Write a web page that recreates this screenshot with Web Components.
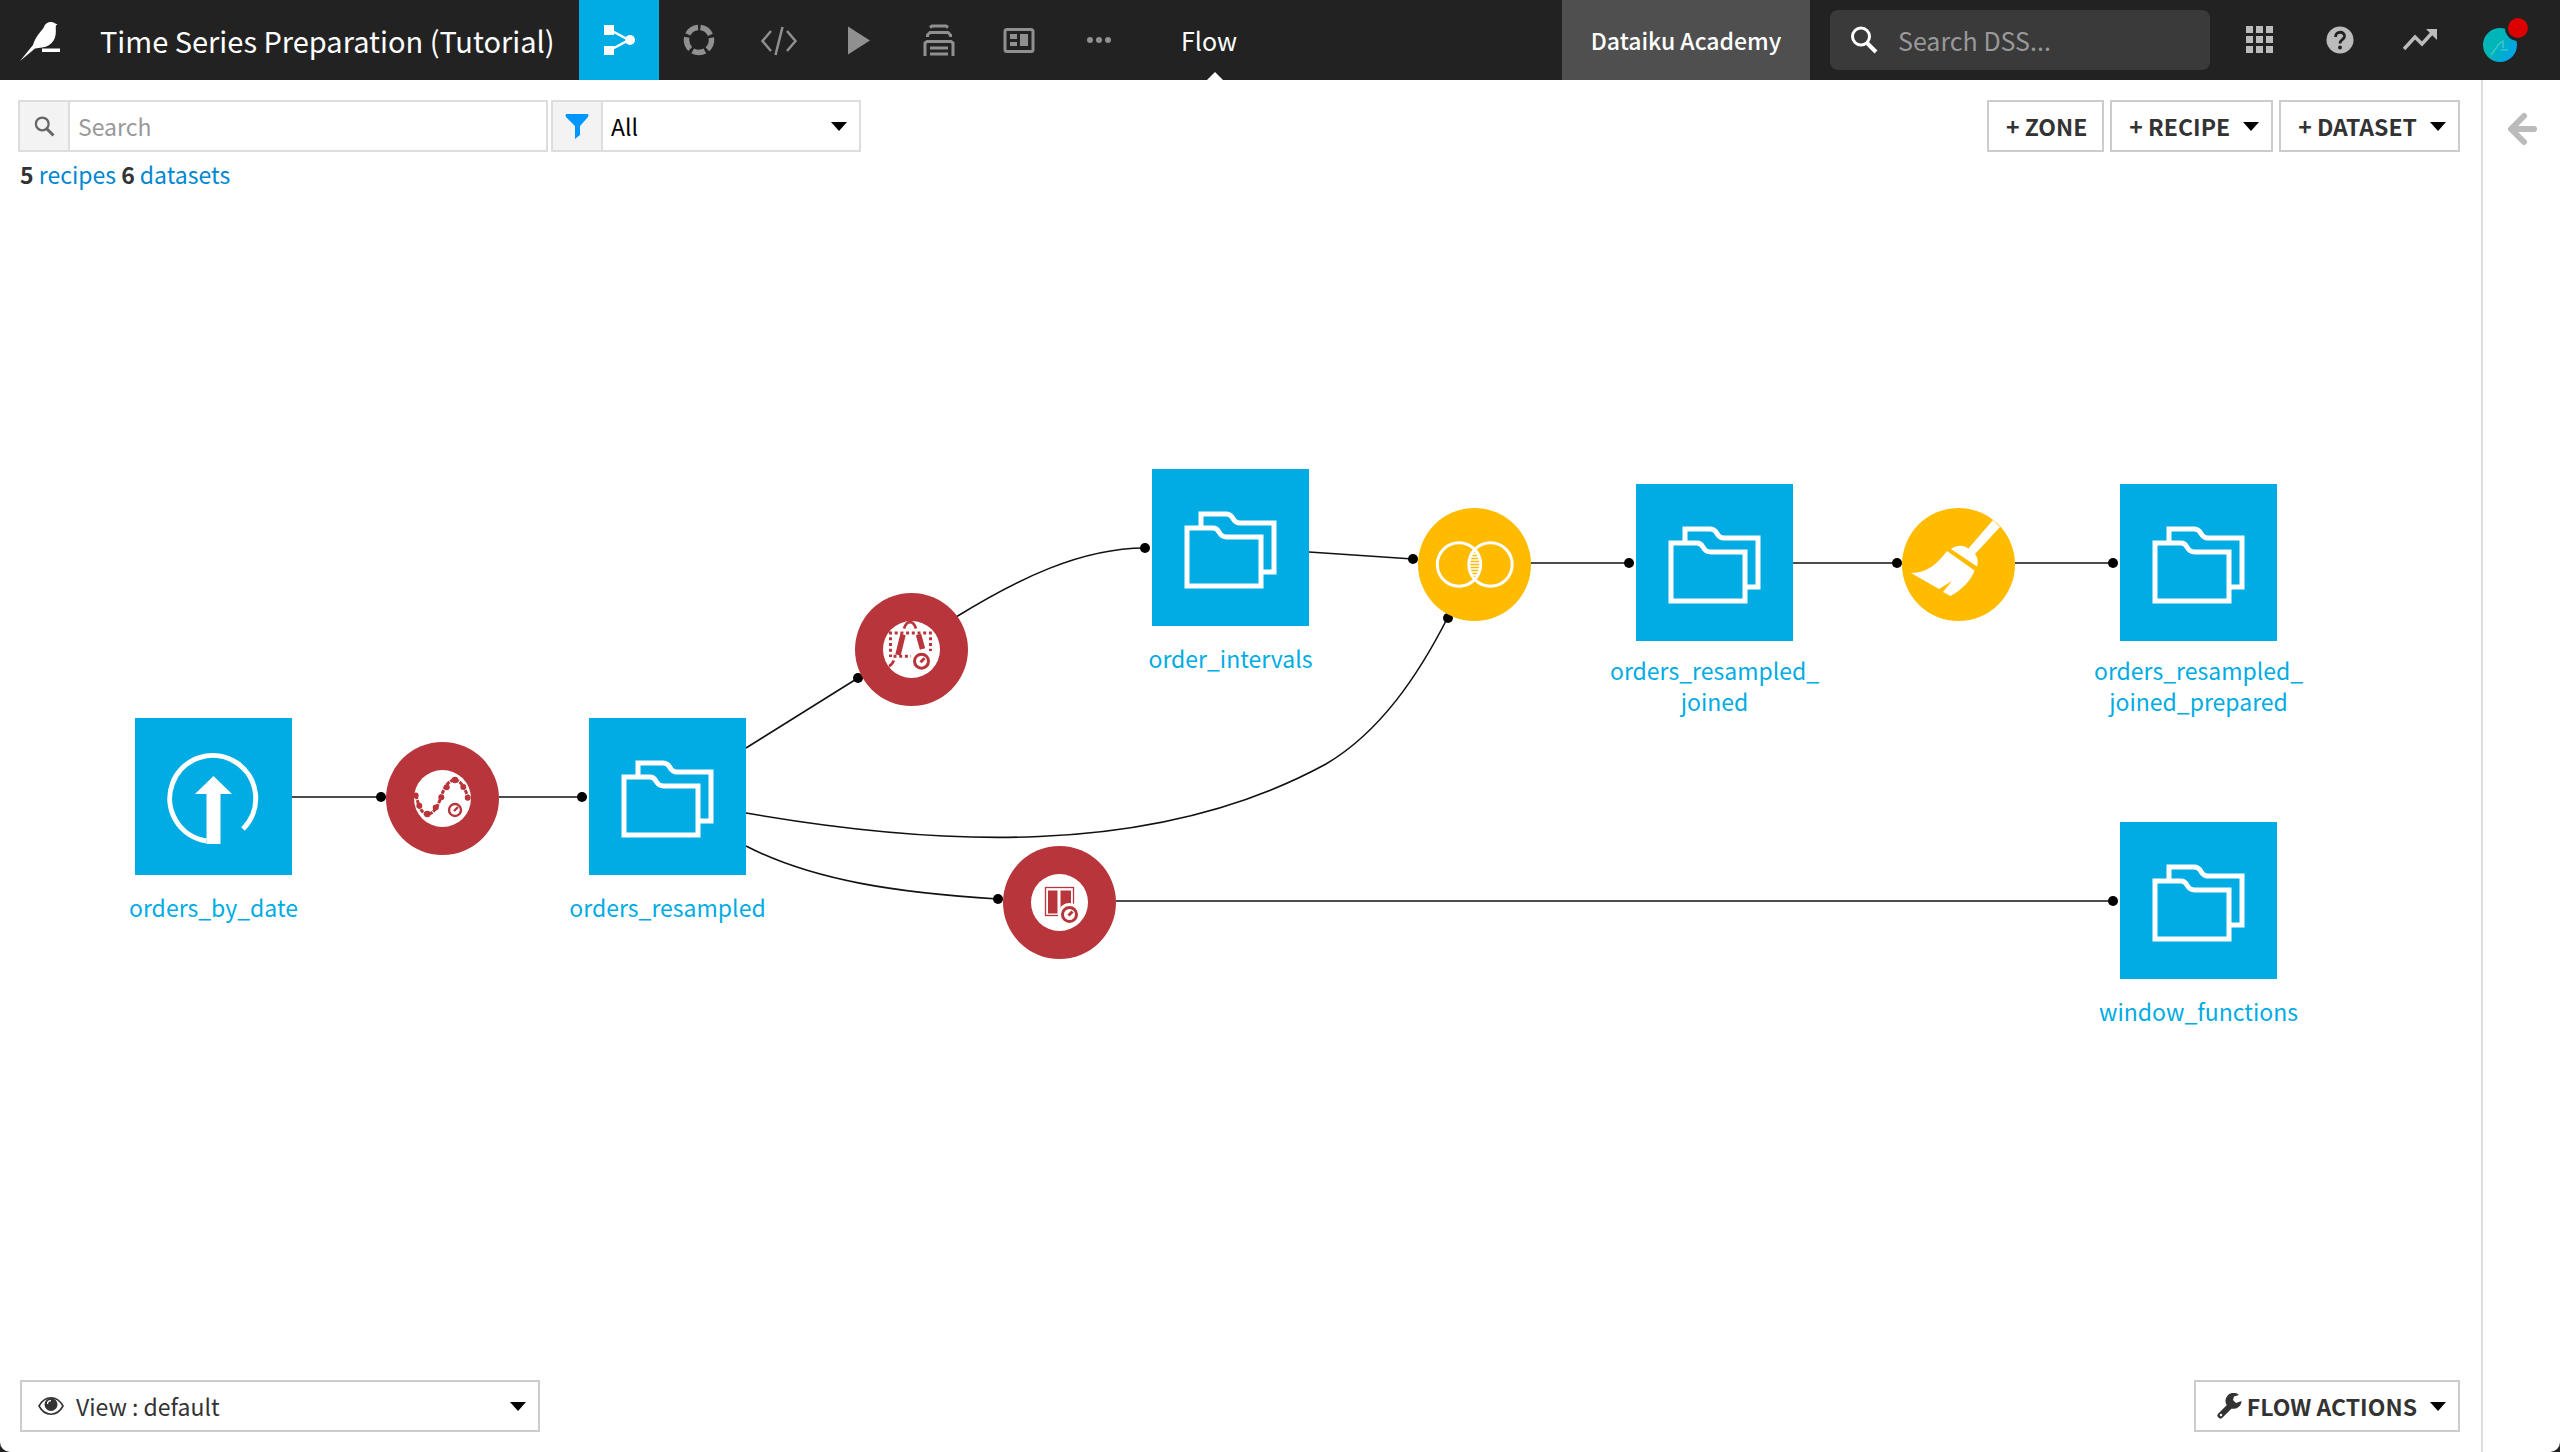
<!DOCTYPE html>
<html lang="en">
<head>
<meta charset="utf-8">
<title>Time Series Preparation (Tutorial) - Flow</title>
<style>
  html, body { margin: 0; height: 100%; background: #222; }
  body { font: 23px/32px "Noto Sans CJK SC", "Open Sans", sans-serif; color: #333; }
</style>
</head>
<body>
<dss-app></dss-app>
<script>
const BASE = `
  *, *::before, *::after { box-sizing: border-box; }
  svg { display: block; flex: none; }
  a { color: inherit; text-decoration: none; }
  button, input, select { font: inherit; color: inherit; margin: 0; border: 0; padding: 0; background: none; border-radius: 0; outline: 0; }
  select { appearance: none; }
  ::placeholder { color: #999; opacity: 1; }
`;
function define(name, html, css, setup) {
  const template = document.createElement('template');
  template.innerHTML = `<style>${BASE}${css}</style>${html}`;
  customElements.define(name, class extends HTMLElement {
    connectedCallback() {
      if (this.shadowRoot) return;
      this.attachShadow({ mode: 'open' }).append(template.content.cloneNode(true));
      if (setup) setup(this, this.shadowRoot);
    }
  });
}

const FOLDERS = `<g fill="none" stroke="#fff" stroke-width="5">
  <path d="M35 59H61C69 59 65 68 75 68H109V117H35Z"/>
  <path d="M49 57V45H74C83 45 79 54 88 54H122V103H111"/></g>`;
const UPLOAD = `<path d="M71.500 123A43 43 0 1 1 108 111" fill="none" stroke="#fff" stroke-width="5"/>
  <path d="M78.500 58L97 76H85.500V126H71.500V76H60Z" fill="#fff"/>`;
const clock = (x, y, r, w) => `<circle cx="${x}" cy="${y}" r="${r}" fill="#fff" stroke="#b8363b" stroke-width="${w}"/>
  <path d="M${x - 1} ${y + 1}l4-4" stroke="#b8363b" stroke-width="${w}"/>`;
const ICONS = {
  logo: ['20 22 42 42', `<path fill="#fff" d="M20 62L33 46C36 36 42 32 44 28C45 24.500 48 23 51 23C54 23 55 24.500 57.500 25.500C56 26 55.500 27 55.800 30C56.500 39 53 47 42 48.500L35 49.500Z"/><path fill="#fff" d="M42 49.500H60V53H42Z"/>`],
  flow: ['0 0 80 80', `<g fill="#fff"><path d="M25 25H35V35H25ZM25 46H35V55H25Z"/><circle cx="51" cy="40" r="5"/></g><path d="M33 31L50 40L33 49" fill="none" stroke="#fff" stroke-width="2.500"/>`],
  ring: ['0 0 80 80', `<circle cx="40" cy="40" r="12.500" fill="none" stroke="#909090" stroke-width="5.500" stroke-dasharray="12.700 3.008" stroke-dashoffset="-1.500" transform="rotate(-90 40 40)"/>`],
  code: ['0 0 80 80', `<path d="M32 31L23.500 41L32 51M48 31L56.500 41L48 51M43.500 27L36.500 55" fill="none" stroke="#909090" stroke-width="2.500"/>`],
  play: ['0 0 80 80', `<path d="M29 26.500L51 40.500L29 54.500Z" fill="#909090"/>`],
  stack: ['0 0 80 80', `<g fill="none" stroke="#909090" stroke-width="3"><path d="M31 27.500L33 26H47L49 27.500M28.500 37V35L31 32.500H49L51.500 35V37M26 56V43L28 41.500H52L54 43V56M31 48H49M31 54H49"/></g>`],
  board: ['0 0 80 80', `<rect x="26" y="29.500" width="28" height="22" rx="2" fill="none" stroke="#909090" stroke-width="3"/><path d="M31 34H38V39H31ZM31 42H38V46H31ZM41 34H49V46H41Z" fill="#909090"/>`],
  dots: ['0 0 80 80', `<g fill="#909090"><circle cx="31" cy="40" r="3"/><circle cx="40" cy="40" r="3"/><circle cx="49" cy="40" r="3"/></g>`],
  lens: ['0 0 28 28', `<circle cx="11" cy="10.500" r="8.500" fill="none" stroke="currentColor" stroke-width="3"/><path d="M17 17L26 26" stroke="currentColor" stroke-width="4"/>`],
  grid: ['0 0 28 28', `<path fill="#bbb" d="M0 0h7v7h-7zM10 0h7v7h-7zM20 0h7v7h-7zM0 10h7v7h-7zM10 10h7v7h-7zM20 10h7v7h-7zM0 20h7v7h-7zM10 20h7v7h-7zM20 20h7v7h-7z"/>`],
  help: ['0 0 28 28', `<circle cx="14" cy="14" r="13.500" fill="#bbb"/><path d="M9.500 11C9.500 4.500 19 5 18.500 10.500C18 14 14 13.500 14 17.500" fill="none" stroke="#222" stroke-width="2.800"/><circle cx="14" cy="21.500" r="2" fill="#222"/>`],
  trend: ['0 0 34 22', `<path d="M1 20L12 8L19 15L29 4" fill="none" stroke="#bbb" stroke-width="3.500"/><path d="M23 0H34V11Z" fill="#bbb"/>`],
  avatar: ['0 0 46 46', `<defs><linearGradient id="g" x2="1" y2=".6"><stop offset=".5" stop-color="#00b5b8"/><stop offset="1" stop-color="#00a3e8"/></linearGradient></defs><circle cx="17" cy="28" r="17" fill="url(#g)"/><path d="M8 38L16 27L20 24V31M18 33H25" stroke="#3cc6ca" fill="none" stroke-width="1.500"/><circle cx="35" cy="11" r="13" fill="#222"/><circle cx="35" cy="11" r="10" fill="#dc0000"/>`],
  funnel: ['0 0 26 26', `<path fill="#0096ff" d="M2 1H24Q25 2 24 4L16 13V22L11 26V13L2 4Q1 2 2 1Z"/>`],
  eye: ['0 0 26 20', `<path d="M1 10C7-1 19-1 25 10C19 21 7 21 1 10Z" fill="none" stroke="#333" stroke-width="1.600"/><circle cx="13" cy="8.500" r="6.500" fill="#333"/><path d="M9.500 8C9.500 6 11 4.700 13 4.700" fill="none" stroke="#fff" stroke-width="1.300"/>`],
  wrench: ['0 0 26 26', `<path d="M3.500 22.500L15 11" stroke="#333" stroke-width="6" stroke-linecap="round"/><path fill="#333" d="M22 2A8 8 0 1 0 24.500 8L19 10L16 7L17 3.500Z"/><circle cx="4" cy="22" r="1.200" fill="#fff"/>`],
  caret: ['0 0 16 9', `<path d="M0 0H16L8 9Z" fill="#000"/>`],
  back: ['0 0 32 34', `<path d="M18 4L5 17L18 30M6 17H28" fill="none" stroke="#bbb" stroke-width="6" stroke-linecap="round" stroke-linejoin="round"/>`],
  folders: ['0 0 157 157', FOLDERS],
  upload: ['0 0 157 157', UPLOAD],
  resample: ['0 0 113 113', `<circle cx="56.500" cy="56.500" r="28.500" fill="#fff"/>
    <path d="M30 53C33 66 36 72 41.500 72C48 72 52 64 55 55S62 38 69 38C75 38 80 48 82 56" fill="none" stroke="#b8363b" stroke-width="3" stroke-dasharray="4 1"/>
    <g fill="#b8363b"><circle cx="29.700" cy="53.500" r="3"/><circle cx="33.300" cy="63.800" r="3"/><circle cx="41.300" cy="72" r="3.300"/><circle cx="49.700" cy="65.500" r="3"/><circle cx="55.300" cy="55.200" r="3"/><circle cx="60.700" cy="45.200" r="3"/><circle cx="69" cy="38" r="3.300"/><circle cx="77.300" cy="45" r="3"/><circle cx="81.700" cy="55.800" r="3"/></g>${clock(69, 68, 6, 2.4)}`],
  interval: ['0 0 113 113', `<circle cx="56.500" cy="56.500" r="28.500" fill="#fff"/>
    <g fill="none" stroke="#b8363b"><path d="M34 40H78M35.500 44.300V64M75.500 44.300V58M38.500 63.200H56" stroke-width="3" stroke-dasharray="3 2.700"/>
    <path d="M49 35.500C52 27 58 27 61 35.500M34 73Q37 72 38.800 67.500" stroke-width="2.700"/><path d="M48 41.500L43 62M63.500 41.500L67.500 56" stroke-width="5.500"/></g>${clock(66.5, 68.2, 7, 3)}`],
  window: ['0 0 113 113', `<circle cx="56.500" cy="56.500" r="28.500" fill="#fff"/><rect x="42.500" y="41.500" width="28" height="28" fill="none" stroke="#b8363b" stroke-width="1.300"/>
    <path d="M45 44.500H54.500V67.500H45ZM57.500 44.500H68V67.500H57.500Z" fill="#b8363b"/><circle cx="66.500" cy="68.500" r="11.500" fill="#fff"/>${clock(66.5, 68.5, 7, 3)}`],
  join: ['0 0 113 113', `<g fill="none" stroke="#fff" stroke-width="3"><circle cx="41" cy="56.500" r="21.700"/><circle cx="72.500" cy="56.500" r="21.700"/></g>
    <path d="M54 46H59M52 49H61M52 52H61M51 55H62M51 58H62M52 61H61M52 64H61M54 67H59" stroke="#fff" stroke-width="1.500"/>`],
  broom: ['0 0 113 113', `<g fill="#fff"><path d="M91 12L98 19L73 46L66 41Z"/><path d="M49 41C56 36 63 37 68 42C75 46 77 52 75 58.500Z"/>
    <path d="M45 43L72.500 62.500C70 71 60 82 48.500 88L41 84L50 73L37 81L9 65C25 65 35 56 45 43Z"/></g>`]
};
define('dss-icon', '', ':host { display: block; flex: none; }', (el, root) => {
  const [box, art] = ICONS[el.getAttribute('name')];
  const [, , w, h] = box.split(' ');
  root.innerHTML += `<svg width="${w}" height="${h}" viewBox="${box}" aria-hidden="true">${art}</svg>`;
});

define('dss-header', `
  <a class="logo" href="#home" aria-label="Home"><dss-icon name="logo"></dss-icon></a>
  <a class="title" href="#project">Time Series Preparation (Tutorial)</a>
  <nav>
    <a class="on" href="#flow" aria-label="Flow"><dss-icon name="flow"></dss-icon></a>
    <a href="#lab" aria-label="Lab"><dss-icon name="ring"></dss-icon></a>
    <a href="#code" aria-label="Code"><dss-icon name="code"></dss-icon></a>
    <a href="#jobs" aria-label="Jobs"><dss-icon name="play"></dss-icon></a>
    <a href="#deploy" aria-label="Deployment"><dss-icon name="stack"></dss-icon></a>
    <a href="#boards" aria-label="Dashboards"><dss-icon name="board"></dss-icon></a>
    <a href="#more" aria-label="More"><dss-icon name="dots"></dss-icon></a>
  </nav>
  <a class="current" href="#flow">Flow</a>
  <a class="academy" href="#academy">Dataiku Academy</a>
  <label class="search"><dss-icon name="lens"></dss-icon><input type="text" placeholder="Search DSS..." aria-label="Search DSS"></label>
  <div class="tools">
    <button aria-label="Applications"><dss-icon name="grid"></dss-icon></button>
    <button aria-label="Help"><dss-icon name="help"></dss-icon></button>
    <button aria-label="Activity"><dss-icon name="trend"></dss-icon></button>
  </div>
  <button class="me" aria-label="Profile"><dss-icon name="avatar"></dss-icon></button>`, `
  :host { display: flex; align-items: center; height: 80px; background: #222; color: #fff; flex: none; }
  .logo { padding: 4px 38px 0 20px; }
  .title { flex: 0 0 479px; font-size: 29px; white-space: nowrap; }
  nav { display: flex; }
  .on { background: #00ace3; }
  .current { position: relative; align-self: stretch; line-height: 80px; margin-left: 42px; padding-right: 12px; font-size: 25px; }
  .current::after { content: ""; position: absolute; bottom: 0; left: 50%; margin-left: -8px; border: 8px solid transparent; border-top: 0; border-bottom-color: #fff; }
  .academy { margin-left: auto; width: 248px; text-align: center; line-height: 80px; background: #4f4f4f; font-weight: 500; }
  .search { display: flex; align-items: center; width: 380px; height: 60px; margin: 0 33px 0 20px; padding: 0 20px; gap: 20px; background: #3a3a3a; border-radius: 8px; font-size: 25px; }
  .search input { flex: 1; min-width: 0; }
  .tools { display: flex; gap: 46px; }
  .tools button { display: flex; align-items: center; justify-content: center; width: 34px; }
  .me { margin: 0 31px 0 46px; }`);

define('dss-select', `<label><span><slot></slot></span><select></select><dss-icon name="caret"></dss-icon></label>`, `
  :host { display: block; height: 52px; border: 2px solid #ddd; background: #fff; }
  label { display: flex; align-items: center; height: 100%; padding-right: 12px; }
  span { display: flex; align-items: center; justify-content: center; align-self: stretch; width: 50px; background: #f3f3f3; border-right: 2px solid #ddd; }
  select { flex: 1; min-width: 0; height: 100%; padding-left: 8px; color: #000; }
  :host([plain]) { border-color: #ccc; }
  :host([plain]) span { background: none; border: 0; width: 58px; }
  :host([plain]) select { color: #333; padding: 0; margin-left: -4px; }`, (el, root) => {
  const select = root.querySelector('select');
  select.setAttribute('aria-label', el.getAttribute('label'));
  select.add(new Option(el.getAttribute('value')));
});

define('dss-button', `<button><slot></slot></button>`, `
  :host { display: block; }
  button { display: flex; align-items: center; justify-content: center; height: 52px; padding: 0 12px 0 17px; border: 2px solid #ccc; background: #fff; font-weight: 700; white-space: nowrap; }
  :host([simple]) button { padding-right: 15px; }
  ::slotted(dss-icon[name=caret]) { margin-left: 13px; }
  ::slotted(dss-icon[name=wrench]) { margin: 0 4px; }`);

define('flow-dataset', `<a href="#dataset"><span><slot></slot></span></a>`, `
  :host { position: absolute; width: 157px; }
  a { display: flex; flex-direction: column; align-items: center; gap: 17px; color: #00ace3; }
  dss-icon { background: #00ace3; }
  span { text-align: center; white-space: nowrap; line-height: 31px; }
  :host([lines]) a { gap: 14px; }`, place);
define('flow-recipe', `<a href="#recipe"></a>`, `
  :host { position: absolute; }
  dss-icon { border-radius: 50%; overflow: hidden; background: #b8363b; }
  :host([kind=visual]) dss-icon { background: #ffbb00; }`, place);
function place(el, root) {
  el.style.left = el.getAttribute('x') + 'px';
  el.style.top = el.getAttribute('y') + 'px';
  const link = root.querySelector('a');
  const icon = document.createElement('dss-icon');
  icon.setAttribute('name', el.getAttribute('icon'));
  link.prepend(icon);
  link.setAttribute('aria-label', el.textContent || el.getAttribute('icon'));
}

define('flow-edges', '', ':host { position: absolute; inset: 0; } svg { width: 100%; height: 100%; overflow: visible; }', (el, root) => {
  const edges = [
    ['M292 597H381', 381, 597], ['M499 597H582', 582, 597], ['M746 548L858 478', 858, 478],
    ['M956 417C1016 380 1080 348 1145 348', 1145, 348], ['M1309 352L1413 359', 1413, 359],
    ['M746 613C930 645 1150 660 1326 564C1380 532 1418 476 1448 417', 1448, 418],
    ['M746 646C814 681 900 693 998 699', 998, 699], ['M1116 701H2113', 2113, 701],
    ['M1530 363H1629', 1629, 363], ['M1793 363H1897', 1897, 363], ['M2015 363H2113', 2113, 363]
  ];
  root.innerHTML += `<svg>${edges.map(([d, x, y]) => `<path d="${d}" fill="none" stroke="#111" stroke-width="1.600"/><circle cx="${x}" cy="${y}" r="5"/>`).join('')}</svg>`;
});

define('flow-canvas', `
  <flow-edges></flow-edges>
  <flow-dataset x="135" y="518" icon="upload">orders_by_date</flow-dataset>
  <flow-recipe x="386" y="542" icon="resample"></flow-recipe>
  <flow-dataset x="589" y="518" icon="folders">orders_resampled</flow-dataset>
  <flow-recipe x="855" y="393" icon="interval"></flow-recipe>
  <flow-recipe x="1003" y="646" icon="window"></flow-recipe>
  <flow-dataset x="1152" y="269" icon="folders">order_intervals</flow-dataset>
  <flow-recipe kind="visual" x="1418" y="308" icon="join"></flow-recipe>
  <flow-dataset lines="2" x="1636" y="284" icon="folders">orders_resampled_<br>joined</flow-dataset>
  <flow-recipe kind="visual" x="1902" y="308" icon="broom"></flow-recipe>
  <flow-dataset lines="2" x="2120" y="284" icon="folders">orders_resampled_<br>joined_prepared</flow-dataset>
  <flow-dataset x="2120" y="622" icon="folders">window_functions</flow-dataset>`,
  ':host { display: block; position: relative; flex: 1; }');

define('flow-toolbar', `
  <div class="row">
    <label class="search"><span><dss-icon name="lens"></dss-icon></span><input type="text" placeholder="Search" aria-label="Search the flow"></label>
    <dss-select label="Filter" value="All"><dss-icon name="funnel"></dss-icon></dss-select>
    <div class="actions">
      <dss-button simple>+ ZONE</dss-button>
      <dss-button>+ RECIPE<dss-icon name="caret"></dss-icon></dss-button>
      <dss-button>+ DATASET<dss-icon name="caret"></dss-icon></dss-button>
    </div>
  </div>
  <div class="counts"><b>5</b> <a href="#recipes">recipes</a> <b>6</b> <a href="#datasets">datasets</a></div>`, `
  :host { display: block; height: 120px; padding: 20px 21px 0 18px; flex: none; }
  .row { display: flex; gap: 3px; }
  .search { display: flex; width: 530px; height: 52px; border: 2px solid #ddd; }
  .search span { display: flex; align-items: center; justify-content: center; width: 50px; background: #f3f3f3; border-right: 2px solid #ddd; color: #666; }
  .search dss-icon { zoom: .75; }
  .search input { flex: 1; min-width: 0; padding-left: 8px; }
  dss-select { width: 310px; }
  .actions { display: flex; gap: 6px; margin-left: auto; }
  .counts { padding: 6px 2px; }
  .counts a { color: #0087d1; }`);

define('flow-footer', `
  <dss-select plain label="View" value="View : default"><dss-icon name="eye"></dss-icon></dss-select>
  <dss-button><dss-icon name="wrench"></dss-icon>FLOW ACTIONS<dss-icon name="caret"></dss-icon></dss-button>`, `
  :host { display: flex; justify-content: space-between; padding: 0 21px 20px 20px; flex: none; }
  dss-select { width: 520px; }`);

define('dss-app', `
  <dss-header></dss-header>
  <main>
    <section><flow-toolbar></flow-toolbar><flow-canvas></flow-canvas><flow-footer></flow-footer></section>
    <aside><button aria-label="Open panel"><dss-icon name="back"></dss-icon></button></aside>
  </main>`, `
  :host { display: flex; flex-direction: column; min-height: 100vh; }
  main { flex: 1; display: flex; background: #fff; border-radius: 0 0 10px 10px; overflow: hidden; }
  section { flex: 1; display: flex; flex-direction: column; min-width: 0; }
  aside { flex: 0 0 79px; border-left: 2px solid #ddd; padding: 32px 0 0 23px; }`);
</script>
</body>
</html>
